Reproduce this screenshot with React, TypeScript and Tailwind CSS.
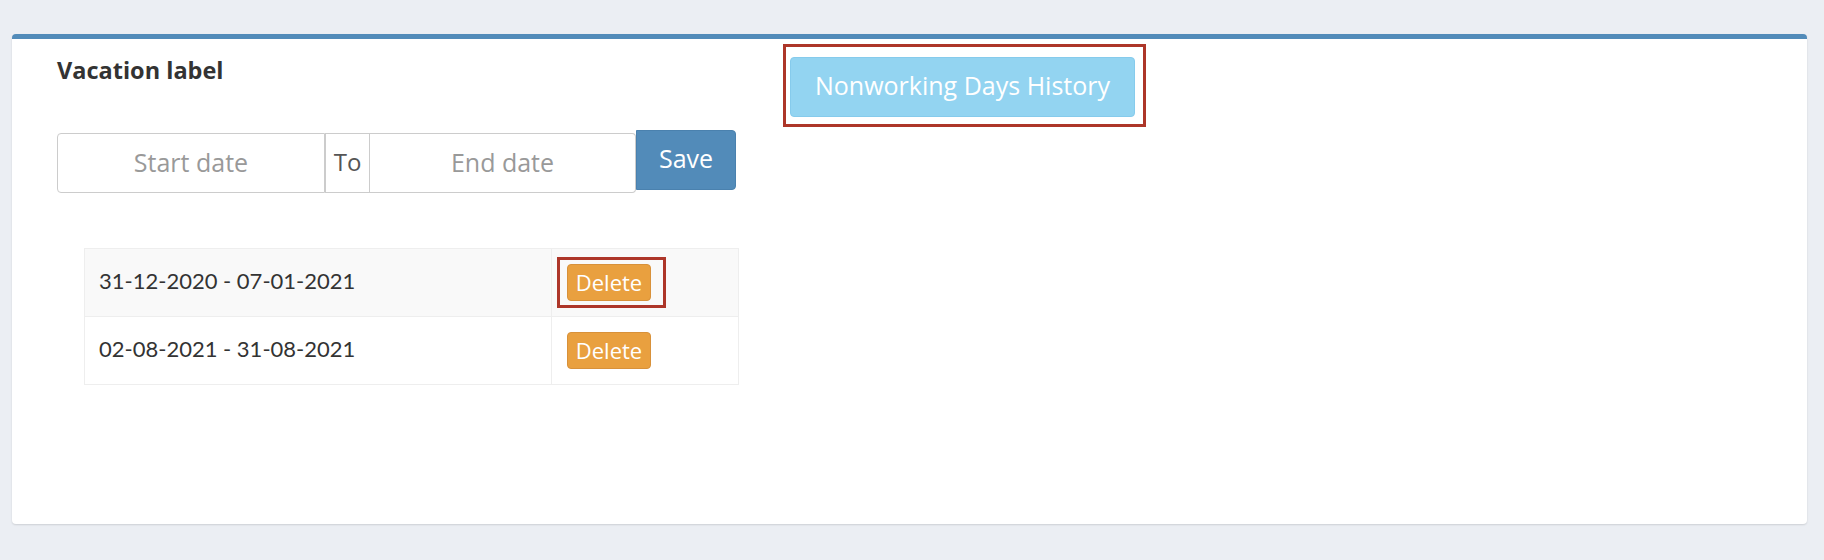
import React from 'react';

const ranges = [
  { id: 1, label: '31-12-2020 - 07-01-2021', marked: true },
  { id: 2, label: '02-08-2021 - 31-08-2021', marked: false },
];

function DeleteButton({ marked }: { marked: boolean }) {
  return (
    <span className="relative inline-block">
      <button className="flex h-[37px] w-[84px] items-center justify-center rounded-[4px] border border-[#d8913a] bg-[#e9a03f] pb-[2px] text-[22px] leading-none text-white">
        Delete
      </button>
      {/* red annotation frame */}
      {marked && (
        <span className="pointer-events-none absolute -top-[7px] -left-[10px] -right-[15px] -bottom-[7px] border-[3px] border-[#ad3629]" />
      )}
    </span>
  );
}

export default function App() {
  return (
    <div className="min-h-[560px] bg-[#ebeef3] pt-[34px] pl-3 pr-[17px] font-['Open_Sans',sans-serif]">
      <div className="h-[490px] rounded-[4px] border-t-[5px] border-[#528bb9] bg-white shadow-[0_1px_2px_rgba(0,0,0,0.13)]">
        <div className="flex pl-[45px] pt-4">
          {/* Left column */}
          <div className="w-[680px]">
            <h2 className="text-[23.5px] leading-[30px] font-bold text-[#333]">Vacation label</h2>

            <div className="mt-[48px] flex items-start">
              <input
                placeholder="Start date"
                className="h-[60px] w-[268px] rounded-l-[4px] border border-[#ccc] bg-white pb-[3px] text-center text-[25px] text-[#555] outline-none placeholder:text-[#999]"
              />
              <span className="flex h-[60px] w-[45px] items-center justify-center border border-[#ccc] pb-[3px] text-[24px] text-[#555]">
                To
              </span>
              <input
                placeholder="End date"
                className="h-[60px] w-[266px] rounded-r-[4px] border border-l-0 border-[#ccc] bg-white pb-[3px] text-center text-[25px] text-[#555] outline-none placeholder:text-[#999]"
              />
              <button className="-mt-[3px] h-[60px] w-[100px] rounded-r-[4px] border border-[#4a81ae] bg-[#528bb9] pb-[3px] text-[25px] text-white">
                Save
              </button>
            </div>

            <table className="mt-[55px] ml-[27px] w-[655px] border-collapse border border-[#eee]">
              <tbody>
                {ranges.map((r, i) => (
                  <tr key={r.id} className={i % 2 === 0 ? 'bg-[#f9f9f9]' : 'bg-white'}>
                    <td className="h-[68px] w-[467px] border border-[#eee] pb-[5px] pl-[14px] align-middle font-['Lato',sans-serif] text-[22px] text-[#333]">
                      {r.label}
                    </td>
                    <td className="h-[68px] border border-[#eee] pl-[15px] align-middle">
                      <DeleteButton marked={r.marked} />
                    </td>
                  </tr>
                ))}
              </tbody>
            </table>
          </div>

          {/* Right column */}
          <div className="ml-[53px] pt-[2px]">
            <span className="relative inline-block">
              <button className="h-[60px] w-[345px] rounded-[4px] border border-[#86cbec] bg-[#93d4f1] pb-[2px] text-[25px] text-white">
                Nonworking Days History
              </button>
              <span className="pointer-events-none absolute -top-[13px] -left-[7px] -right-[11px] -bottom-[10px] border-[3px] border-[#ad3629]" />
            </span>
          </div>
        </div>
      </div>
    </div>
  );
}
